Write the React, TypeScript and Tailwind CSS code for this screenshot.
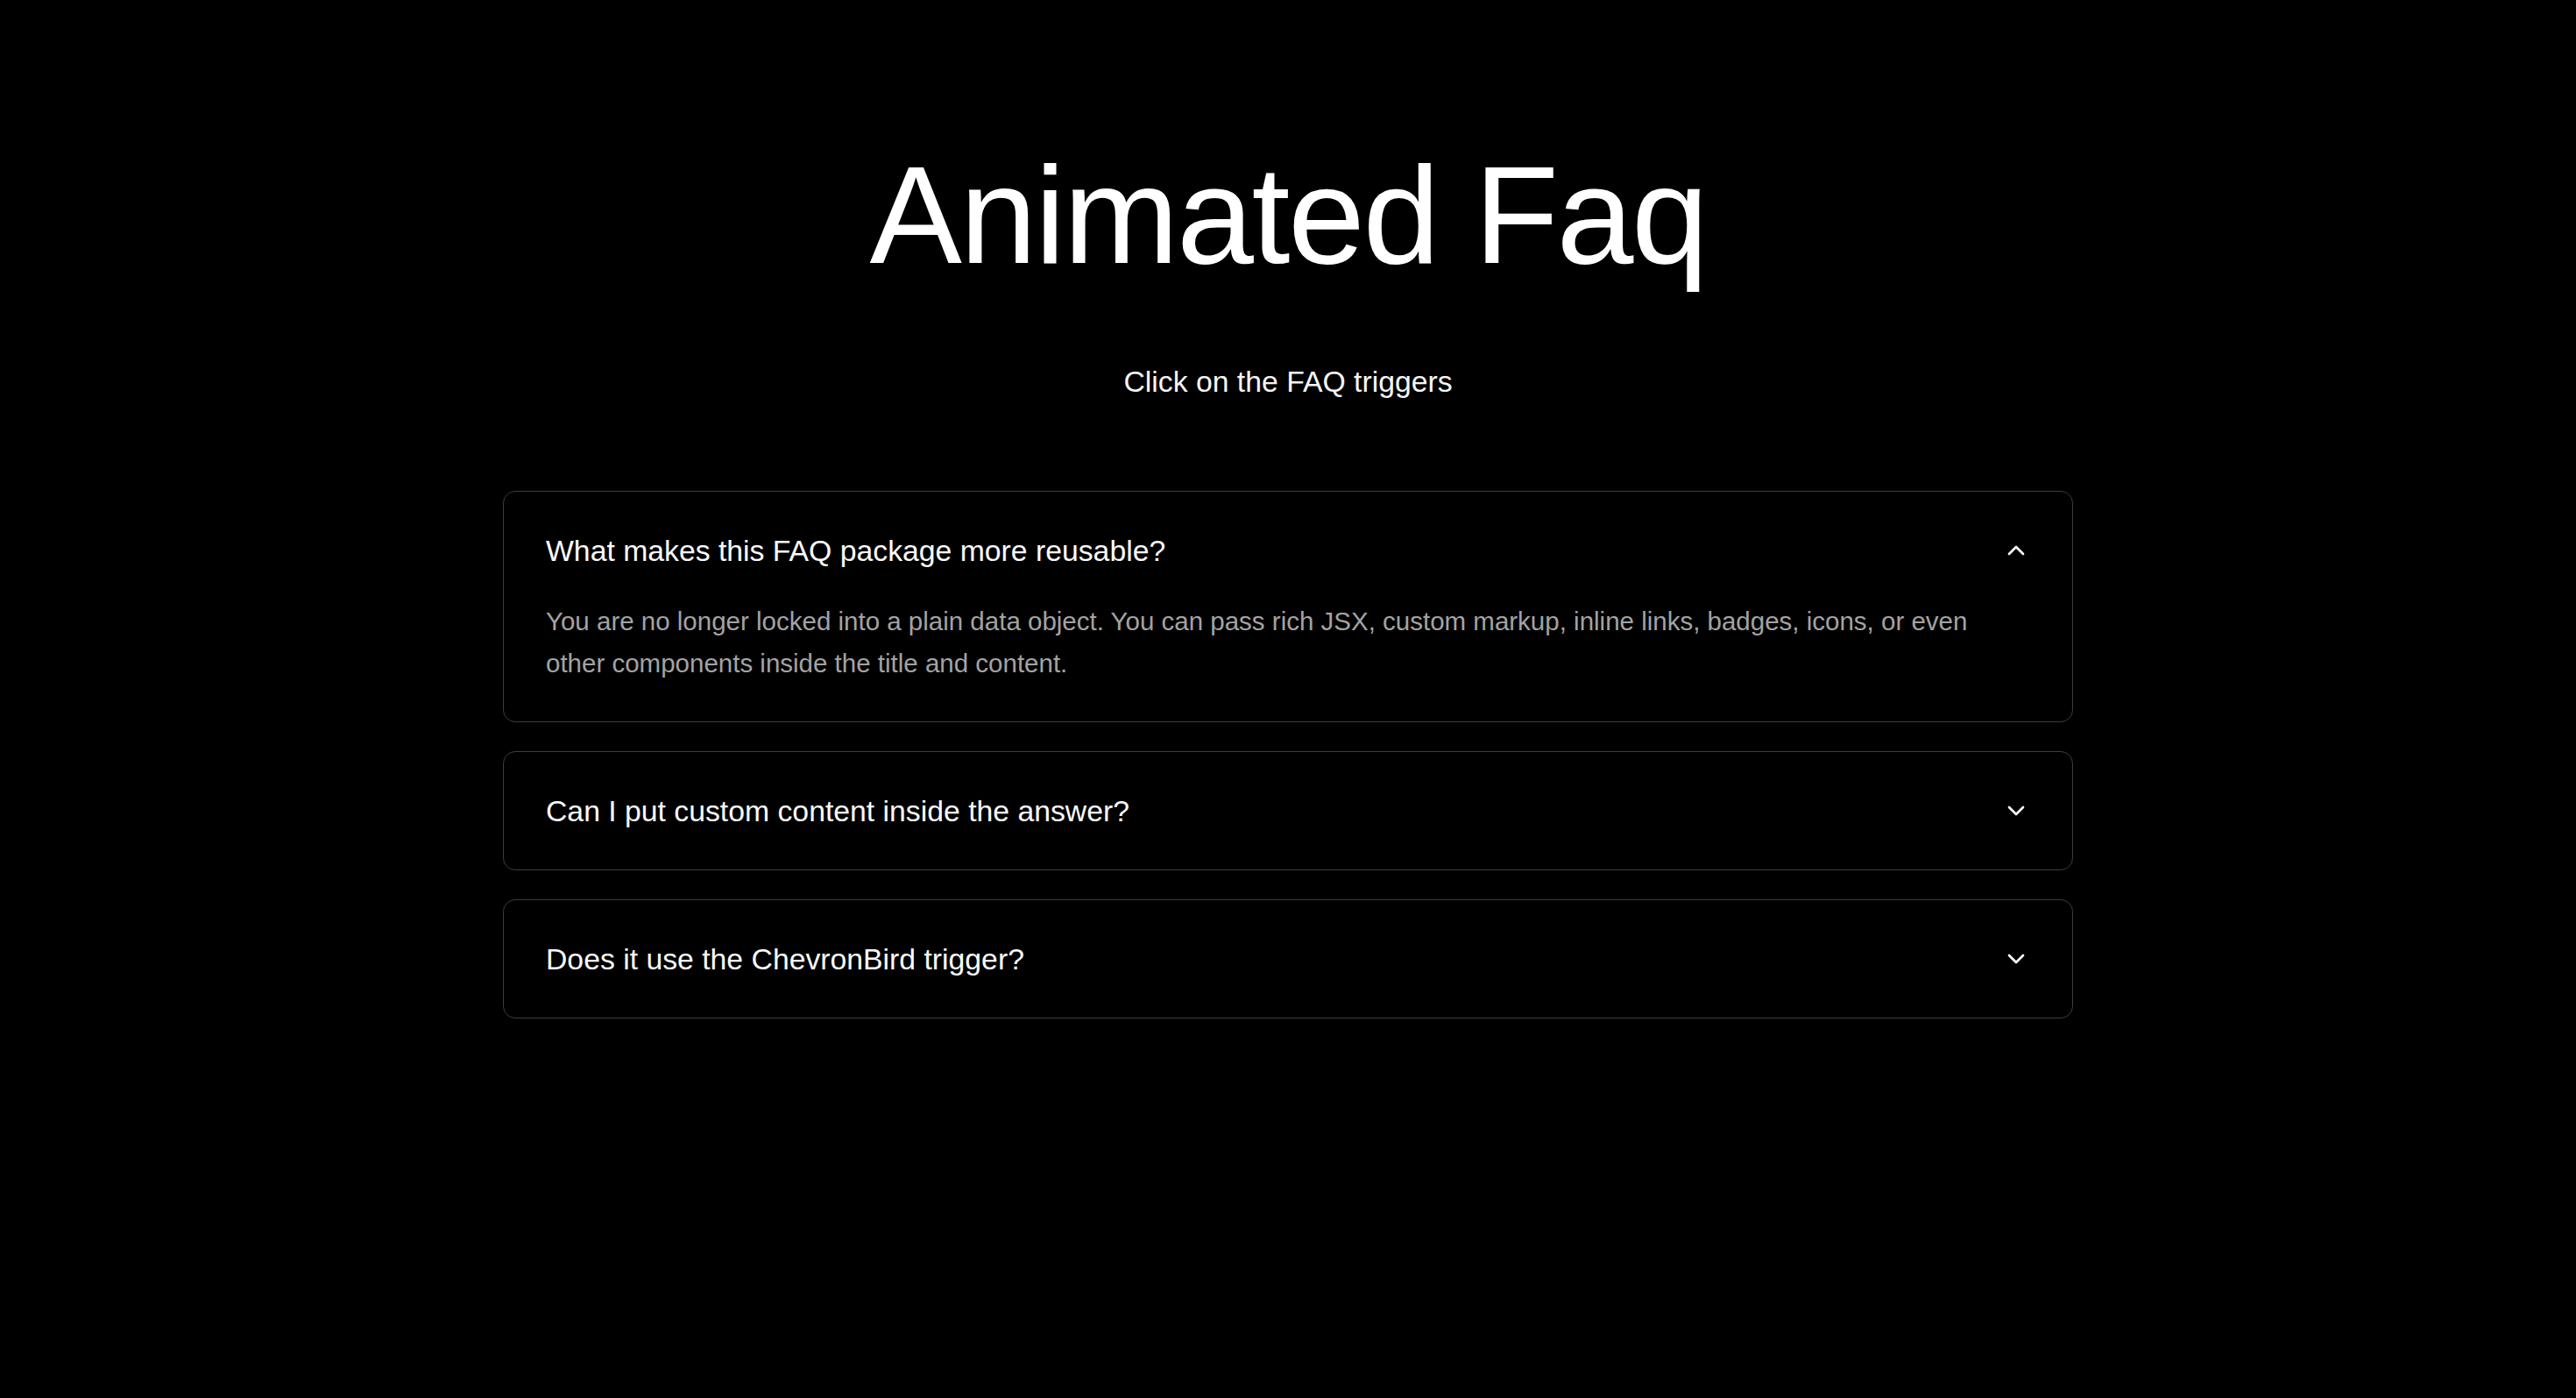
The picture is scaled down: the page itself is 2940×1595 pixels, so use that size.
import { useState } from "react";
import { ChevronDown } from "lucide-react";

type FaqItem = {
  id: string;
  title: string;
  content: string;
};

const items: FaqItem[] = [
  {
    id: "reusable",
    title: "What makes this FAQ package more reusable?",
    content:
      "You are no longer locked into a plain data object. You can pass rich JSX, custom markup, inline links, badges, icons, or even other components inside the title and content.",
  },
  {
    id: "custom-content",
    title: "Can I put custom content inside the answer?",
    content:
      "Yes. The content slot accepts any React node, so lists, code snippets and buttons all render as they would anywhere else.",
  },
  {
    id: "trigger",
    title: "Does it use the ChevronBird trigger?",
    content:
      "It does. The chevron flips when a panel opens and settles back down when it closes.",
  },
];

function FaqCard({
  item,
  open,
  onToggle,
}: {
  item: FaqItem;
  open: boolean;
  onToggle: () => void;
}) {
  return (
    <div className="rounded-[14px] border border-[#3d3d3d] bg-black">
      <button
        type="button"
        onClick={onToggle}
        className={
          open
            ? "flex w-full items-center justify-between gap-6 px-12 pt-12 pb-[38px] text-left cursor-pointer"
            : "flex w-full items-center justify-between gap-6 px-12 py-12 text-left cursor-pointer"
        }
      >
        <span className="text-[33.75px] leading-[38px] text-[#fafafa]">
          {item.title}
        </span>
        <ChevronDown
          size={32}
          strokeWidth={2}
          className={
            open
              ? "shrink-0 text-white rotate-180 transition-transform duration-300"
              : "shrink-0 text-white transition-transform duration-300"
          }
        />
      </button>

      {open && (
        <div className="px-12 pb-[42px]">
          <p className="max-w-[1660px] text-[29.5px] leading-[48px] text-[#a3a3a3]">
            {item.content}
          </p>
        </div>
      )}
    </div>
  );
}

export default function App() {
  const [openId, setOpenId] = useState<string | null>("reusable");

  return (
    <div
      className="min-h-screen w-full bg-black text-white"
      style={{ fontFamily: '"Liberation Sans", Arial, sans-serif' }}
    >
      <main className="flex flex-col items-center pt-[166px] pb-24">
        <h1 className="text-[158px] leading-none tracking-[-0.015em] font-normal">
          Animated Faq
        </h1>
        <p className="mt-[86px] text-[33.75px] leading-[50px] text-[#f5f5f5]">
          Click on the FAQ triggers
        </p>

        <div className="mt-[100px] flex w-[1792px] flex-col gap-[33px]">
          {items.map((item) => (
            <FaqCard
              key={item.id}
              item={item}
              open={openId === item.id}
              onToggle={() =>
                setOpenId((current) => (current === item.id ? null : item.id))
              }
            />
          ))}
        </div>
      </main>
    </div>
  );
}
